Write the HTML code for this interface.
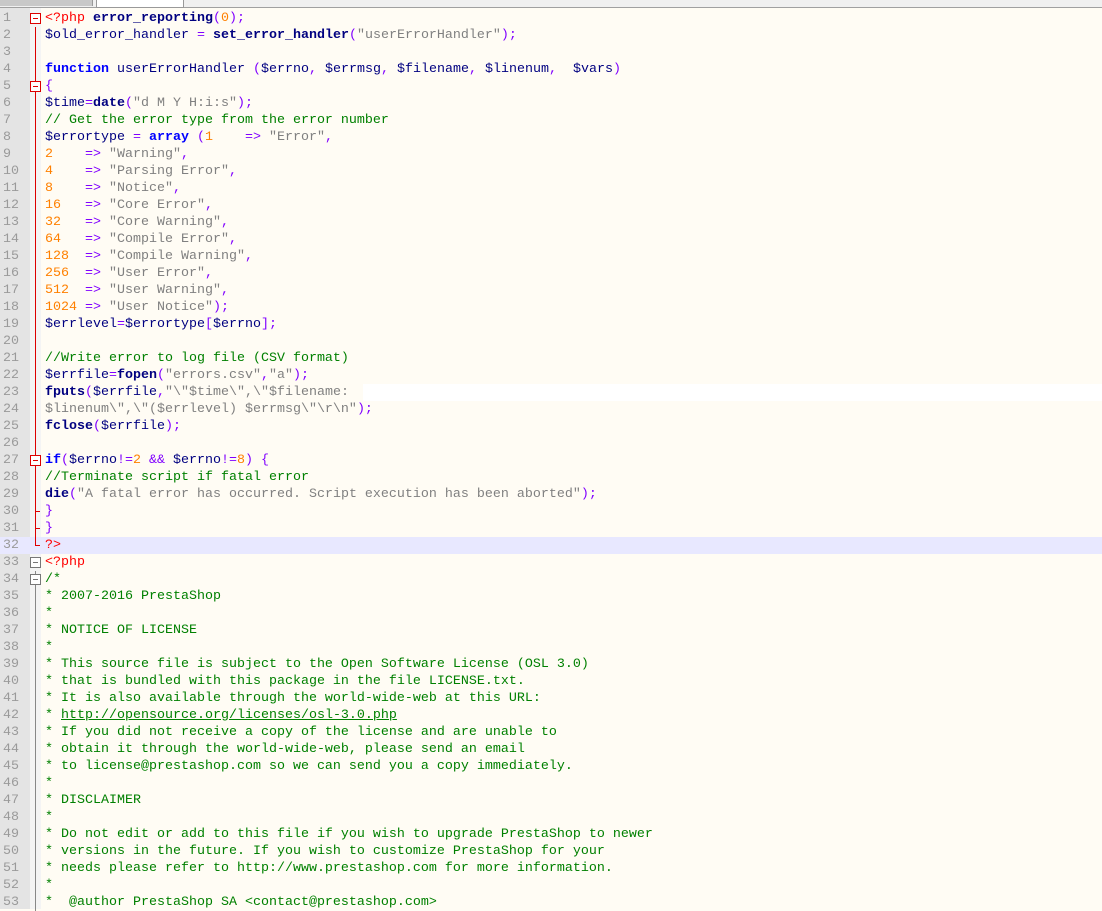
<!DOCTYPE html>
<html><head><meta charset="utf-8"><style>
html,body{margin:0;padding:0;width:1102px;height:909px;overflow:hidden;background:#fffcf4;}
#tabs{position:absolute;left:0;top:0;width:1102px;height:7px;background:#f0f0f0;border-bottom:1px solid #a0a0a0;}
#t1{position:absolute;left:0;top:0;width:92px;height:6px;background:#c8c8c8;border-right:1px solid #999;}
#t2{position:absolute;left:96px;top:0;width:86px;height:7px;background:#fff;border:1px solid #999;border-top:none;}
#gut{position:absolute;left:0;top:8px;width:30px;height:901px;background:#e4e4e4;}
#fold{position:absolute;left:30px;top:8px;width:11px;height:901px;background:#f4f4f4;}
#code{position:absolute;left:0;top:10px;width:1102px;font:13.33px/17px "Liberation Mono",monospace;}
.l{position:relative;height:17px;white-space:pre;}
.n{position:absolute;left:0;width:12px;text-align:left;color:#9a9a9a;padding-left:3px;}
.c{position:absolute;left:45px;}
.hl{background:#e8e8ff;}
.k{color:#0000ff;font-weight:bold}.f{color:#000080;font-weight:bold}.v{color:#000080}
.s{color:#808080}.o{color:#8000ff}.d{color:#ff8000}.g{color:#008000}.r{color:#ff0000}
.box{position:absolute;left:30px;top:3px;width:11px;height:11px;border:1px solid #d00;box-sizing:border-box;background:#fff}
.box:after{content:"";position:absolute;left:2px;top:4px;width:5px;height:1px;background:#d00}
.vl{position:absolute;left:35px;top:0;width:1px;height:17px;background:#d00}
.tk{position:absolute;left:35px;top:8px;width:5px;height:1px;background:#d00}
.gb{border-color:#777}.gb:after{background:#777}.gl{background:#888}
</style></head><body>
<div id="tabs"><div id="t1"></div><div id="t2"></div></div>
<div id="gut"></div><div id="fold"></div>
<div style="position:absolute;left:363px;top:384px;width:739px;height:17px;background:#fff"></div>
<div id="code">
<div class="l"><span class="n">1</span><span class="box"></span><span class="c"><span class="r">&lt;?php</span> <span class="f">error_reporting</span><span class="o">(</span><span class="d">0</span><span class="o">);</span></span></div>
<div class="l"><span class="n">2</span><span class="vl"></span><span class="c"><span class="v">$old_error_handler</span> <span class="o">=</span> <span class="f">set_error_handler</span><span class="o">(</span><span class="s">"userErrorHandler"</span><span class="o">);</span></span></div>
<div class="l"><span class="n">3</span><span class="vl"></span></div>
<div class="l"><span class="n">4</span><span class="vl"></span><span class="c"><span class="k">function</span> <span class="v">userErrorHandler</span> <span class="o">(</span><span class="v">$errno</span><span class="o">,</span> <span class="v">$errmsg</span><span class="o">,</span> <span class="v">$filename</span><span class="o">,</span> <span class="v">$linenum</span><span class="o">,</span>  <span class="v">$vars</span><span class="o">)</span></span></div>
<div class="l"><span class="n">5</span><span class="vl"></span><span class="box"></span><span class="c"><span class="o">{</span></span></div>
<div class="l"><span class="n">6</span><span class="vl"></span><span class="c"><span class="v">$time</span><span class="o">=</span><span class="f">date</span><span class="o">(</span><span class="s">"d M Y H:i:s"</span><span class="o">);</span></span></div>
<div class="l"><span class="n">7</span><span class="vl"></span><span class="c"><span class="g">// Get the error type from the error number</span></span></div>
<div class="l"><span class="n">8</span><span class="vl"></span><span class="c"><span class="v">$errortype</span> <span class="o">=</span> <span class="k">array</span> <span class="o">(</span><span class="d">1</span>    <span class="o">=&gt;</span> <span class="s">"Error"</span><span class="o">,</span></span></div>
<div class="l"><span class="n">9</span><span class="vl"></span><span class="c"><span class="d">2</span>    <span class="o">=&gt;</span> <span class="s">"Warning"</span><span class="o">,</span></span></div>
<div class="l"><span class="n">10</span><span class="vl"></span><span class="c"><span class="d">4</span>    <span class="o">=&gt;</span> <span class="s">"Parsing Error"</span><span class="o">,</span></span></div>
<div class="l"><span class="n">11</span><span class="vl"></span><span class="c"><span class="d">8</span>    <span class="o">=&gt;</span> <span class="s">"Notice"</span><span class="o">,</span></span></div>
<div class="l"><span class="n">12</span><span class="vl"></span><span class="c"><span class="d">16</span>   <span class="o">=&gt;</span> <span class="s">"Core Error"</span><span class="o">,</span></span></div>
<div class="l"><span class="n">13</span><span class="vl"></span><span class="c"><span class="d">32</span>   <span class="o">=&gt;</span> <span class="s">"Core Warning"</span><span class="o">,</span></span></div>
<div class="l"><span class="n">14</span><span class="vl"></span><span class="c"><span class="d">64</span>   <span class="o">=&gt;</span> <span class="s">"Compile Error"</span><span class="o">,</span></span></div>
<div class="l"><span class="n">15</span><span class="vl"></span><span class="c"><span class="d">128</span>  <span class="o">=&gt;</span> <span class="s">"Compile Warning"</span><span class="o">,</span></span></div>
<div class="l"><span class="n">16</span><span class="vl"></span><span class="c"><span class="d">256</span>  <span class="o">=&gt;</span> <span class="s">"User Error"</span><span class="o">,</span></span></div>
<div class="l"><span class="n">17</span><span class="vl"></span><span class="c"><span class="d">512</span>  <span class="o">=&gt;</span> <span class="s">"User Warning"</span><span class="o">,</span></span></div>
<div class="l"><span class="n">18</span><span class="vl"></span><span class="c"><span class="d">1024</span> <span class="o">=&gt;</span> <span class="s">"User Notice"</span><span class="o">);</span></span></div>
<div class="l"><span class="n">19</span><span class="vl"></span><span class="c"><span class="v">$errlevel</span><span class="o">=</span><span class="v">$errortype</span><span class="o">[</span><span class="v">$errno</span><span class="o">];</span></span></div>
<div class="l"><span class="n">20</span><span class="vl"></span></div>
<div class="l"><span class="n">21</span><span class="vl"></span><span class="c"><span class="g">//Write error to log file (CSV format)</span></span></div>
<div class="l"><span class="n">22</span><span class="vl"></span><span class="c"><span class="v">$errfile</span><span class="o">=</span><span class="f">fopen</span><span class="o">(</span><span class="s">"errors.csv"</span><span class="o">,</span><span class="s">"a"</span><span class="o">);</span></span></div>
<div class="l"><span class="n">23</span><span class="vl"></span><span class="c"><span class="f">fputs</span><span class="o">(</span><span class="v">$errfile</span><span class="o">,</span><span class="s">"\"$time\",\"$filename:</span></span></div>
<div class="l"><span class="n">24</span><span class="vl"></span><span class="c"><span class="s">$linenum\",\"($errlevel) $errmsg\"\r\n"</span><span class="o">);</span></span></div>
<div class="l"><span class="n">25</span><span class="vl"></span><span class="c"><span class="f">fclose</span><span class="o">(</span><span class="v">$errfile</span><span class="o">);</span></span></div>
<div class="l"><span class="n">26</span><span class="vl"></span></div>
<div class="l"><span class="n">27</span><span class="vl"></span><span class="box"></span><span class="c"><span class="k">if</span><span class="o">(</span><span class="v">$errno</span><span class="o">!=</span><span class="d">2</span> <span class="o">&amp;&amp;</span> <span class="v">$errno</span><span class="o">!=</span><span class="d">8</span><span class="o">)</span> <span class="o">{</span></span></div>
<div class="l"><span class="n">28</span><span class="vl"></span><span class="c"><span class="g">//Terminate script if fatal error</span></span></div>
<div class="l"><span class="n">29</span><span class="vl"></span><span class="c"><span class="f">die</span><span class="o">(</span><span class="s">"A fatal error has occurred. Script execution has been aborted"</span><span class="o">);</span></span></div>
<div class="l"><span class="n">30</span><span class="vl"></span><span class="tk"></span><span class="c"><span class="o">}</span></span></div>
<div class="l"><span class="n">31</span><span class="vl"></span><span class="tk"></span><span class="c"><span class="o">}</span></span></div>
<div class="l hl"><span class="n">32</span><span class="vl" style="height:9px"></span><span class="tk"></span><span class="c"><span class="r">?&gt;</span></span></div>
<div class="l"><span class="n">33</span><span class="box gb"></span><span class="c"><span class="r">&lt;?php</span></span></div>
<div class="l"><span class="n">34</span><span class="vl gl"></span><span class="box gb"></span><span class="c g">/*</span></div>
<div class="l"><span class="n">35</span><span class="vl gl"></span><span class="c g">* 2007-2016 PrestaShop</span></div>
<div class="l"><span class="n">36</span><span class="vl gl"></span><span class="c g">*</span></div>
<div class="l"><span class="n">37</span><span class="vl gl"></span><span class="c g">* NOTICE OF LICENSE</span></div>
<div class="l"><span class="n">38</span><span class="vl gl"></span><span class="c g">*</span></div>
<div class="l"><span class="n">39</span><span class="vl gl"></span><span class="c g">* This source file is subject to the Open Software License (OSL 3.0)</span></div>
<div class="l"><span class="n">40</span><span class="vl gl"></span><span class="c g">* that is bundled with this package in the file LICENSE.txt.</span></div>
<div class="l"><span class="n">41</span><span class="vl gl"></span><span class="c g">* It is also available through the world-wide-web at this URL:</span></div>
<div class="l"><span class="n">42</span><span class="vl gl"></span><span class="c g">* <u>http://opensource.org/licenses/osl-3.0.php</u></span></div>
<div class="l"><span class="n">43</span><span class="vl gl"></span><span class="c g">* If you did not receive a copy of the license and are unable to</span></div>
<div class="l"><span class="n">44</span><span class="vl gl"></span><span class="c g">* obtain it through the world-wide-web, please send an email</span></div>
<div class="l"><span class="n">45</span><span class="vl gl"></span><span class="c g">* to license@prestashop.com so we can send you a copy immediately.</span></div>
<div class="l"><span class="n">46</span><span class="vl gl"></span><span class="c g">*</span></div>
<div class="l"><span class="n">47</span><span class="vl gl"></span><span class="c g">* DISCLAIMER</span></div>
<div class="l"><span class="n">48</span><span class="vl gl"></span><span class="c g">*</span></div>
<div class="l"><span class="n">49</span><span class="vl gl"></span><span class="c g">* Do not edit or add to this file if you wish to upgrade PrestaShop to newer</span></div>
<div class="l"><span class="n">50</span><span class="vl gl"></span><span class="c g">* versions in the future. If you wish to customize PrestaShop for your</span></div>
<div class="l"><span class="n">51</span><span class="vl gl"></span><span class="c g">* needs please refer to http://www.prestashop.com for more information.</span></div>
<div class="l"><span class="n">52</span><span class="vl gl"></span><span class="c g">*</span></div>
<div class="l"><span class="n">53</span><span class="vl gl"></span><span class="c g">*  @author PrestaShop SA &lt;contact@prestashop.com&gt;</span></div>
</div>
</body></html>
